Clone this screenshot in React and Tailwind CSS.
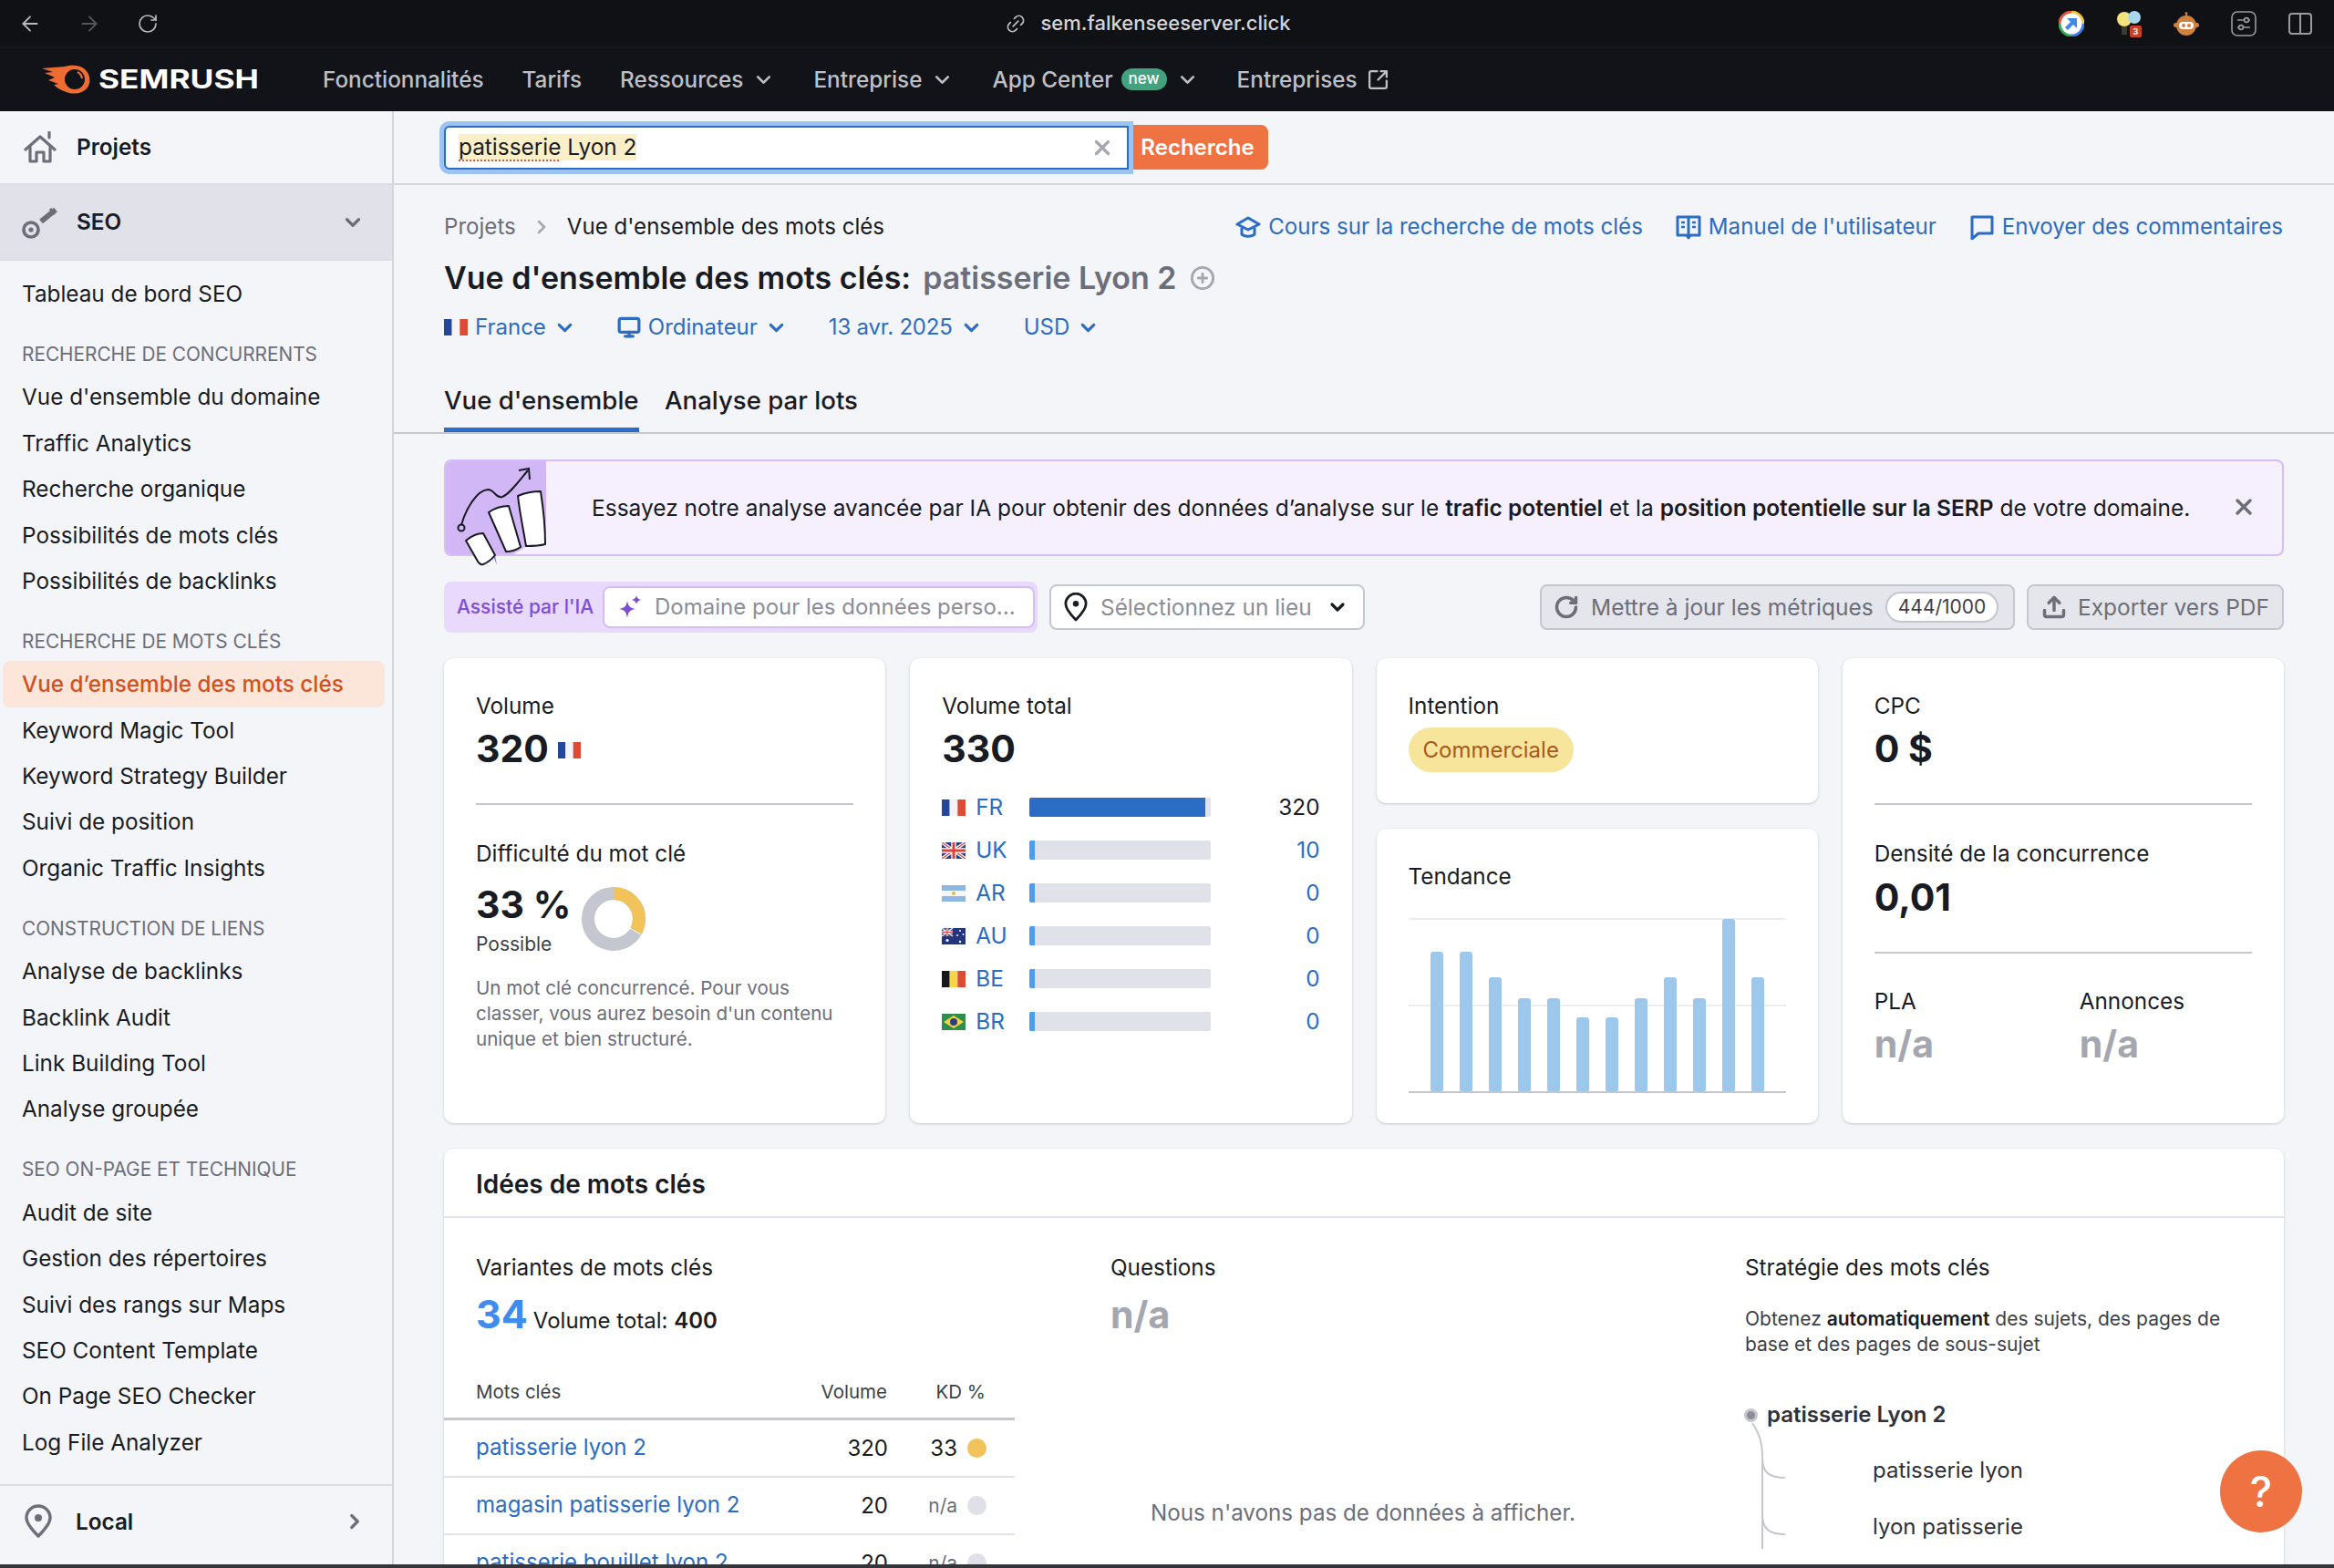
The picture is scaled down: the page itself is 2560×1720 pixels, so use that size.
import React from 'react';
import {
  ArrowLeft, ArrowRight, RotateCw, Link2, ChevronDown, ChevronRight, SquareArrowOutUpRight, X,
  Monitor, Upload, CirclePlus,
} from 'lucide-react';

const font = { fontFamily: 'Inter, "Noto Sans", sans-serif' };

const sideSections = [
  { title: null, items: ['Tableau de bord SEO'] },
  { title: 'RECHERCHE DE CONCURRENTS', items: ["Vue d'ensemble du domaine", 'Traffic Analytics', 'Recherche organique', 'Possibilités de mots clés', 'Possibilités de backlinks'] },
  { title: 'RECHERCHE DE MOTS CLÉS', items: ['Vue d’ensemble des mots clés', 'Keyword Magic Tool', 'Keyword Strategy Builder', 'Suivi de position', 'Organic Traffic Insights'] },
  { title: 'CONSTRUCTION DE LIENS', items: ['Analyse de backlinks', 'Backlink Audit', 'Link Building Tool', 'Analyse groupée'] },
  { title: 'SEO ON-PAGE ET TECHNIQUE', items: ['Audit de site', 'Gestion des répertoires', 'Suivi des rangs sur Maps', 'SEO Content Template', 'On Page SEO Checker', 'Log File Analyzer'] },
];

const FlagFR = ({ className = 'w-[26px] h-[18px]' }) => (
  <svg viewBox="0 0 3 2" preserveAspectRatio="none" className={className}>
    <rect width="1" height="2" fill="#25479b" />
    <rect x="1" width="1" height="2" fill="#f4f4f8" />
    <rect x="2" width="1" height="2" fill="#dc4b33" />
  </svg>
);
const FlagUK = () => (
  <svg viewBox="0 0 26 18" className="w-[26px] h-[18px]">
    <rect width="26" height="18" fill="#29408f" />
    <path d="M0 0L26 18M26 0L0 18" stroke="#fff" strokeWidth="3.5" />
    <path d="M0 0L26 18M26 0L0 18" stroke="#d8443a" strokeWidth="1.2" />
    <path d="M13 0V18M0 9H26" stroke="#fff" strokeWidth="5.5" />
    <path d="M13 0V18M0 9H26" stroke="#d8443a" strokeWidth="3" />
  </svg>
);
const FlagAR = () => (
  <svg viewBox="0 0 26 18" className="w-[26px] h-[18px]">
    <rect width="26" height="18" fill="#8db8e4" />
    <rect y="6" width="26" height="6" fill="#f5f6fa" />
    <circle cx="13" cy="9" r="2" fill="#e9b64c" />
  </svg>
);
const FlagAU = () => (
  <svg viewBox="0 0 26 18" className="w-[26px] h-[18px]">
    <rect width="26" height="18" fill="#23357f" />
    <rect width="12" height="9" fill="#3a4a90" />
    <path d="M0 0L12 9M12 0L0 9" stroke="#eee" strokeWidth="1.4" />
    <path d="M6 0V9M0 4.5H12" stroke="#fff" strokeWidth="2.4" />
    <path d="M6 0V9M0 4.5H12" stroke="#d8443a" strokeWidth="1.2" />
    <circle cx="6" cy="13.5" r="1.6" fill="#fff" />
    <circle cx="20" cy="3" r="1" fill="#fff" />
    <circle cx="23.5" cy="7" r="1" fill="#fff" />
    <circle cx="17" cy="8" r="1" fill="#fff" />
    <circle cx="20" cy="15" r="1.2" fill="#fff" />
  </svg>
);
const FlagBE = () => (
  <svg viewBox="0 0 3 2" preserveAspectRatio="none" className="w-[26px] h-[18px]">
    <rect width="1" height="2" fill="#17181c" />
    <rect x="1" width="1" height="2" fill="#f6d548" />
    <rect x="2" width="1" height="2" fill="#dc4b33" />
  </svg>
);
const FlagBR = () => (
  <svg viewBox="0 0 26 18" className="w-[26px] h-[18px]">
    <rect width="26" height="18" fill="#2f8f4a" />
    <path d="M13 2L24 9L13 16L2 9Z" fill="#f4d34a" />
    <circle cx="13" cy="9" r="4" fill="#27407f" />
  </svg>
);

const countries = [
  { code: 'FR', Flag: FlagFR, val: '320', fill: 97 },
  { code: 'UK', Flag: FlagUK, val: '10', fill: 3 },
  { code: 'AR', Flag: FlagAR, val: '0', fill: 3 },
  { code: 'AU', Flag: FlagAU, val: '0', fill: 3 },
  { code: 'BE', Flag: FlagBE, val: '0', fill: 3 },
  { code: 'BR', Flag: FlagBR, val: '0', fill: 3 },
];

const trend = [154, 154, 126, 103, 103, 82, 82, 103, 126, 103, 190, 126];

const keywords = [
  { kw: 'patisserie lyon 2', vol: '320', kd: '33', dot: 'bg-[#f2c35a]' },
  { kw: 'magasin patisserie lyon 2', vol: '20', kd: 'n/a', dot: 'bg-[#dfe0e8]' },
  { kw: 'patisserie bouillet lyon 2', vol: '20', kd: 'n/a', dot: 'bg-[#dfe0e8]' },
];

const SemrushLogo = () => (
  <div className="flex items-center gap-[8px]">
    <svg viewBox="0 0 54 32" className="w-[54px] h-[32px]">
      <path d="M0 4 L25 2 C32 0 42 0 47 5 C53 10 54 19 50 25 C45 32 34 33 27 30 C21 28 17 26 13 22 L18 21 L7 17 L14 14 L3 9 L12 8 Z" fill="#ef6d32" />
      <circle cx="36" cy="16" r="11" fill="#111318" />
      <path d="M39 8 A 9 9 0 0 1 44 15" fill="none" stroke="#ef6d32" strokeWidth="2.2" />
    </svg>
    <span className="text-[28px] leading-none font-bold text-white inline-block origin-left scale-x-[1.26] w-[146px]">SEMRUSH</span>
  </div>
);

const ExtensionIcons = () => (
  <div className="flex items-center gap-[35px] mr-[24px]">
    <svg viewBox="0 0 28 28" className="w-[28px] h-[28px]">
      <circle cx="14" cy="14" r="13" fill="#fff" />
      <path d="M14 1 A13 13 0 0 1 27 14" fill="none" stroke="#f2c23e" strokeWidth="3" />
      <path d="M27 14 A13 13 0 0 1 14 27" fill="none" stroke="#3f7ee8" strokeWidth="3" />
      <path d="M14 27 A13 13 0 0 1 1 14" fill="none" stroke="#3aa757" strokeWidth="3" />
      <path d="M1 14 A13 13 0 0 1 14 1" fill="none" stroke="#e4573d" strokeWidth="3" />
      <path d="M9 8H20V19L16 15L10 21L7 18L13 12Z" fill="#3f8ae8" />
    </svg>
    <div className="relative w-[28px] h-[30px]">
      <svg viewBox="0 0 28 30" className="w-[28px] h-[30px]">
        <circle cx="9" cy="10" r="8" fill="#f4e27a" />
        <circle cx="20" cy="8" r="7" fill="#a8d8ee" />
        <rect x="6" y="18" width="6" height="9" fill="#3c3a30" />
      </svg>
      <span className="absolute right-0 bottom-0 w-[13px] h-[13px] rounded-[2px] bg-[#c9402a] text-white text-[9px] leading-[13px] text-center font-bold">3</span>
    </div>
    <svg viewBox="0 0 28 28" className="w-[28px] h-[28px]">
      <circle cx="14" cy="2.5" r="1.5" fill="#c9773a" />
      <rect x="13" y="3" width="2" height="4" fill="#c9773a" />
      <circle cx="14" cy="16" r="11" fill="#d2803e" />
      <rect x="0" y="13" width="28" height="5" rx="2.5" fill="#d2803e" />
      <rect x="6" y="12" width="16" height="8" rx="4" fill="#fff" />
      <circle cx="11" cy="16" r="2" fill="#d2803e" />
      <circle cx="17" cy="16" r="2" fill="#d2803e" />
    </svg>
    <svg viewBox="0 0 28 28" fill="none" stroke="#9a9ba0" strokeWidth="1.6" className="w-[28px] h-[28px]">
      <rect x="1" y="1" width="26" height="26" rx="6" />
      <path d="M7 10H21M7 18H21" />
      <circle cx="17" cy="10" r="2.4" fill="#111318" />
      <circle cx="11" cy="18" r="2.4" fill="#111318" />
    </svg>
    <svg viewBox="0 0 26 26" fill="none" stroke="#9a9ba0" strokeWidth="2" className="w-[26px] h-[26px]">
      <rect x="1" y="2" width="24" height="22" rx="3" />
      <path d="M13 2V24" />
    </svg>
  </div>
);

const Chrome = () => (
  <div className="relative h-[52px] bg-[#0f1115] border-b border-[#1e1c1c] flex items-center shrink-0">
    <div className="flex items-center gap-[39px] pl-[20px] text-[#b9babd]">
      <ArrowLeft className="w-[26px] h-[26px]" strokeWidth={1.7} />
      <ArrowRight className="w-[26px] h-[26px] text-[#55565a]" strokeWidth={1.7} />
      <RotateCw className="w-[24px] h-[24px]" strokeWidth={1.7} />
    </div>
    <div className="flex-1 flex items-center justify-center gap-[15px] pr-[344px] pl-[430px]">
      <Link2 className="w-[24px] h-[24px] text-[#b9babd] -rotate-45" strokeWidth={1.8} />
      <span className="text-[22px] font-medium text-[#d3d4d7] whitespace-nowrap">sem.falkenseeserver.click</span>
    </div>
    <ExtensionIcons />
  </div>
);

const NavItem = ({ children, chevron }) => (
  <span className="flex items-center gap-[10px] text-[24.3px] font-medium text-[#bfc0c7] whitespace-nowrap">
    {children}
    {chevron && <ChevronDown className="w-[25px] h-[25px]" strokeWidth={2.6} />}
  </span>
);

const TopNav = () => (
  <div className="h-[70px] bg-[#111318] flex items-center pl-[46px] shrink-0">
    <div className="w-[308px] shrink-0"><SemrushLogo /></div>
    <div className="flex items-center gap-[42px]">
      <NavItem>Fonctionnalités</NavItem>
      <NavItem>Tarifs</NavItem>
      <NavItem chevron>Ressources</NavItem>
      <NavItem chevron>Entreprise</NavItem>
      <NavItem chevron>
        App Center
        <span className="-ml-[1px] h-[24px] px-[8px] rounded-full bg-[#43a17f] text-white text-[17px] leading-[23px] font-medium">new</span>
      </NavItem>
      <NavItem>
        Entreprises
        <SquareArrowOutUpRight className="w-[25px] h-[25px]" strokeWidth={2.2} />
      </NavItem>
    </div>
  </div>
);

const Sidebar = () => (
  <aside className="w-[432px] shrink-0 border-r-2 border-[#d5d6de] bg-[#f4f5f9] flex flex-col">
    <div className="h-[81px] flex items-center gap-[22px] pl-[26px] border-b-2 border-[#dcdde4] shrink-0">
      <svg viewBox="0 0 36 36" fill="none" stroke="#6c6e79" strokeWidth="3.2" strokeLinejoin="round" strokeLinecap="round" className="w-[36px] h-[36px]">
        <path d="M2 20L18 6L34 20" />
        <path d="M7 17V33H14V23H22V33H29V17" />
        <path d="M28 1V7" />
      </svg>
      <span className="text-[24.3px] font-semibold text-[#191b23]">Projets</span>
    </div>
    <div className="h-[83px] flex items-center justify-between pl-[24px] pr-[30px] bg-[#e0e1e9] border-b-2 border-[#dcdde4] shrink-0">
      <div className="flex items-center gap-[20px]">
        <svg viewBox="0 0 40 38" fill="none" stroke="#6c6e79" className="w-[40px] h-[38px]">
          <circle cx="10" cy="27" r="8" strokeWidth="3.6" />
          <circle cx="10" cy="27" r="2.6" fill="#6c6e79" stroke="none" />
          <path d="M21 18L37 5" strokeWidth="6" />
          <path d="M31 4L36 10" strokeWidth="3" />
        </svg>
        <span className="text-[24.3px] font-semibold text-[#191b23]">SEO</span>
      </div>
      <ChevronDown className="w-[26px] h-[26px] text-[#6c6e79]" strokeWidth={3} />
    </div>
    <nav className="pt-[11px] flex-1 min-h-0">
      {sideSections.map((sec) => (
        <div key={sec.items[0]} className={sec.title ? 'mt-[19px]' : ''}>
          {sec.title && (
            <div className="h-[44px] flex items-center pl-[24px] text-[20.8px] text-[#6c6e79] whitespace-nowrap">{sec.title}</div>
          )}
          {sec.items.map((it) => {
            const active = it === 'Vue d’ensemble des mots clés';
            return (
              <div key={it} className={active ? 'h-[50.4px] flex items-center ml-[3px] mr-[8px] pl-[21px] rounded-[8px] bg-[#fce6da] text-[#d5501f] font-medium text-[24.3px] whitespace-nowrap' : 'h-[50.4px] flex items-center pl-[24px] text-[#191b23] text-[24.3px] whitespace-nowrap'}>
                {it}
              </div>
            );
          })}
        </div>
      ))}
    </nav>
    <div className="h-[88px] pb-[8px] flex items-center justify-between pl-[26px] pr-[28px] border-t-2 border-[#dcdde4] shrink-0">
      <div className="flex items-center gap-[25px]">
        <svg viewBox="0 0 32 38" fill="none" stroke="#6c6e79" strokeWidth="3.4" className="w-[32px] h-[38px]">
          <path d="M16 35C8 27 3 21 3 15A13 13 0 0 1 29 15C29 21 24 27 16 35Z" strokeLinejoin="round" />
          <circle cx="16" cy="15" r="4" fill="#6c6e79" stroke="none" />
        </svg>
        <span className="text-[24.3px] font-semibold text-[#191b23]">Local</span>
      </div>
      <ChevronRight className="w-[26px] h-[26px] text-[#6c6e79]" strokeWidth={3} />
    </div>
  </aside>
);

const SearchBar = () => (
  <div className="h-[81px] flex items-center pl-[55px] border-b-2 border-[#d5d6de] shrink-0">
    <div className="relative w-[751px] h-[48px] flex items-center justify-between pl-[14px] pr-[14px] bg-white rounded-l-[6px] border-2 border-[#2b6cc4] shadow-[0_0_0_5px_#9cc3f2]">
      <span className="text-[24.4px] leading-[29px] bg-[#fbefc8] text-[#191b23] whitespace-nowrap">
        <span className="underline decoration-dotted decoration-[#e4573d] decoration-2 underline-offset-[5px]">patisserie</span> Lyon 2
      </span>
      <X className="w-[26px] h-[26px] text-[#a4a6b0]" strokeWidth={3} />
    </div>
    <div className="ml-[3px] w-[150px] h-[49px] pr-[5px] flex items-center justify-center rounded-r-[8px] bg-[#ef7342] text-white text-[24px] font-semibold">Recherche</div>
  </div>
);

const TopLink = ({ icon, children }) => (
  <span className="flex items-center gap-[8px] text-[24.1px] text-[#2b6cc4] whitespace-nowrap">{icon}{children}</span>
);

const Filter = ({ icon, children }) => (
  <span className="flex items-center gap-[8px] text-[24px] text-[#2b6cc4] whitespace-nowrap">
    {icon}{children}
    <ChevronDown className="w-[25px] h-[25px]" strokeWidth={3} />
  </span>
);

const PageHead = () => (
  <div className="px-[55px] shrink-0">
    <div className="h-[90px] flex items-center justify-between pt-[2px]">
      <div className="flex items-center text-[24.1px] whitespace-nowrap">
        <span className="text-[#6c6e79]">Projets</span>
        <ChevronRight className="w-[24px] h-[24px] mx-[16px] text-[#a4a6b0]" strokeWidth={2.5} />
        <span className="text-[#191b23]">Vue d'ensemble des mots clés</span>
      </div>
      <div className="flex items-center gap-[36px] mr-[1px]">
        <TopLink icon={
          <svg viewBox="0 0 28 28" fill="none" stroke="#2b6cc4" strokeWidth="3" className="w-[28px] h-[28px]">
            <path d="M14 4L26 11L14 17L2 11Z" strokeLinejoin="round" />
            <path d="M7 15V22C10 25 18 25 21 22V15" />
          </svg>
        }>Cours sur la recherche de mots clés</TopLink>
        <TopLink icon={
          <svg viewBox="0 0 28 28" fill="none" stroke="#2b6cc4" strokeWidth="3" className="w-[28px] h-[28px]">
            <path d="M2 3H26V23H16L14 26L12 23H2Z" strokeLinejoin="round" />
            <path d="M14 3V23" />
            <path d="M6 9H10M6 14H10M18 9H22M18 14H22" strokeWidth="2.6" />
          </svg>
        }>Manuel de l'utilisateur</TopLink>
        <TopLink icon={
          <svg viewBox="0 0 28 28" fill="none" stroke="#2b6cc4" strokeWidth="3" className="w-[28px] h-[28px]">
            <path d="M3 3H25V21H10L3 27Z" strokeLinejoin="round" />
          </svg>
        }>Envoyer des commentaires</TopLink>
      </div>
    </div>
    <div className="h-[36px] flex items-center whitespace-nowrap -mt-[6px]">
      <h1 className="text-[34px] leading-none font-semibold text-[#191b23]">Vue d'ensemble des mots clés:</h1>
      <span className="ml-[13px] text-[34px] leading-none font-semibold text-[#6c6e79]">patisserie Lyon 2</span>
      <CirclePlus className="ml-[14px] w-[28px] h-[28px] text-[#a4a6b0]" strokeWidth={2.4} />
    </div>
    <div className="flex items-center gap-[45px] h-[40px] mt-[16px]">
      <Filter icon={<FlagFR />}>France</Filter>
      <Filter icon={<Monitor className="w-[26px] h-[26px]" strokeWidth={3} />}>Ordinateur</Filter>
      <Filter><span className="tracking-[-0.2px]">13 avr. 2025</span></Filter>
      <Filter>USD</Filter>
    </div>
    <div className="flex gap-[28px] mt-[36px] text-[27.6px] leading-none text-[#191b23] font-medium">
      <div className="h-[60px] pt-[11px] border-b-[6px] border-[#2b6cc4] w-[214px] whitespace-nowrap">Vue d'ensemble</div>
      <div className="pt-[11px] whitespace-nowrap">Analyse par lots</div>
    </div>
  </div>
);

const Banner = () => (
  <div className="mx-[55px] mt-[28px] h-[106px] shrink-0 flex items-center rounded-[8px] border-2 border-[#d7bdf6] bg-[#f6f0fe] relative">
    <div className="relative w-[110px] h-[102px] shrink-0 bg-[#d2b7f6] rounded-l-[6px]">
      <svg viewBox="0 0 112 126" fill="none" className="absolute left-0 top-0 w-[112px] h-[126px]">
        <path d="M110 80L110 102L74 102Z" fill="#f6f0fe" />
        <path d="M17 70C22 52 34 32 46 31C54 31 54 41 62 39C70 36 80 22 90 10" stroke="#191b23" strokeWidth="2" />
        <path d="M80 10L91 8L92 20" stroke="#191b23" strokeWidth="2" />
        <circle cx="17" cy="73" r="3.5" stroke="#191b23" strokeWidth="2" />
        <path d="M56 114L42 79L54 103Z" fill="#9a72e6" />
        <path d="M22 87C28 82 34 79 41 79L54 103C50 108 46 111 41 113C38 114 36 112 34 108Z" fill="#fff" stroke="#191b23" strokeWidth="2" strokeLinejoin="round" />
        <path d="M69 49L83 94L78 96Z" fill="#9a72e6" />
        <path d="M47 56C54 51 62 49 69 49L82 94C78 97 72 99 66 99Z" fill="#fff" stroke="#191b23" strokeWidth="2" strokeLinejoin="round" />
        <path d="M104 33L110 91L106 92Z" fill="#9a72e6" />
        <path d="M79 38C86 35 96 33 104 33C107 52 109 72 109 91C102 93 94 93 88 93C85 75 81 56 79 38Z" fill="#fff" stroke="#191b23" strokeWidth="2" strokeLinejoin="round" />
      </svg>
    </div>
    <p className="ml-[50px] text-[24.5px] text-[#191b23] whitespace-nowrap">
      Essayez notre analyse avancée par IA pour obtenir des données d’analyse sur le <b className="font-semibold">trafic potentiel</b> et la <b className="font-semibold">position potentielle sur la SERP</b> de votre domaine.
    </p>
    <X className="absolute right-[28px] top-[36px] w-[28px] h-[28px] text-[#6c6e79]" strokeWidth={3} />
  </div>
);

const Toolbar = () => (
  <div className="mx-[55px] mt-[28px] h-[56px] shrink-0 flex items-center">
    <div className="w-[651px] h-[56px] rounded-[8px] bg-[#e9d9fc] flex items-center pl-[14px] pr-[3px]">
      <span className="w-[160px] text-[21px] font-medium text-[#7c4ed8] whitespace-nowrap">Assisté par l'IA</span>
      <div className="flex-1 h-[46px] rounded-[8px] bg-white border-2 border-[#d7bdf6] flex items-center pl-[14px] gap-[13px]">
        <svg viewBox="0 0 28 28" fill="#7c4ed8" className="w-[28px] h-[28px]">
          <path d="M11 7C12 13 14 15 20 16C14 17 12 19 11 26C10 19 8 17 2 16C8 15 10 13 11 7Z" />
          <path d="M21 1C21.5 4 23 5 26 6C23 7 21.5 8 21 11C20.5 8 19 7 16 6C19 5 20.5 4 21 1Z" />
        </svg>
        <span className="text-[24px] text-[#8b8d98] whitespace-nowrap">Domaine pour les données perso...</span>
      </div>
    </div>
    <div className="ml-[13px] w-[346px] h-[50px] rounded-[8px] bg-white border-2 border-[#c4c6d0] flex items-center justify-between pl-[14px] pr-[16px]">
      <div className="flex items-center gap-[14px]">
        <svg viewBox="0 0 28 34" fill="none" stroke="#191b23" strokeWidth="3" className="w-[26px] h-[32px]">
          <path d="M14 32C7 25 2 19 2 13A12 12 0 0 1 26 13C26 19 21 25 14 32Z" strokeLinejoin="round" />
          <circle cx="14" cy="13" r="3.5" fill="#191b23" stroke="none" />
        </svg>
        <span className="text-[24.4px] text-[#8b8d98] whitespace-nowrap">Sélectionnez un lieu</span>
      </div>
      <ChevronDown className="w-[24px] h-[24px] text-[#191b23]" strokeWidth={3.2} />
    </div>
    <div className="ml-auto flex items-center gap-[13px]">
      <div className="w-[521px] h-[50px] rounded-[8px] bg-[#e4e6ec] border-2 border-[#c4c6d0] flex items-center pl-[13px] text-[24.5px] text-[#6c6e79] whitespace-nowrap">
        <RotateCw className="w-[28px] h-[28px] mr-[13px]" strokeWidth={3} />
        Mettre à jour les métriques
        <span className="ml-[13px] h-[34px] px-[12px] rounded-full bg-white border-2 border-[#c4c6d0] text-[21px] leading-[30px] text-[#3d3f48]">444/1000</span>
      </div>
      <div className="w-[282px] h-[50px] rounded-[8px] bg-[#e4e6ec] border-2 border-[#c4c6d0] flex items-center pl-[14px] text-[24.5px] text-[#6c6e79] whitespace-nowrap">
        <Upload className="w-[28px] h-[28px] mr-[12px]" strokeWidth={3} />
        Exporter vers PDF
      </div>
    </div>
  </div>
);

const Card = ({ className = '', children }) => (
  <div className={`bg-white rounded-[10px] shadow-[0_1px_3px_rgba(25,27,35,0.2)] ${className}`}>{children}</div>
);

const Label = ({ children }) => <div className="text-[24.3px] leading-[30px] text-[#191b23] whitespace-nowrap">{children}</div>;

const Metric = ({ children }) => <div className="text-[41px] leading-[52px] font-bold text-[#191b23] whitespace-nowrap">{children}</div>;

const NotAvailable = () => <div className="text-[41px] leading-[52px] font-bold text-[#a4a6b0]">n/a</div>;

const VolumeCard = () => (
  <Card className="h-[510px] pt-[37px] px-[35px]">
    <Label>Volume</Label>
    <div className="flex items-center gap-[10px] mt-[6px]">
      <Metric>320</Metric>
      <FlagFR className="w-[25px] h-[18px] mt-[3px]" />
    </div>
    <div className="h-[2px] bg-[#c4c6d0] mt-[34px]" />
    <div className="mt-[38px]"><Label>Difficulté du mot clé</Label></div>
    <div className="flex items-center gap-[11px] mt-[15px]">
      <div>
        <Metric>33 %</Metric>
        <div className="text-[21px] leading-[28px] text-[#3d3f48] mt-[4px]">Possible</div>
      </div>
      <svg viewBox="0 0 72 72" className="w-[72px] h-[72px]">
        <circle cx="36" cy="36" r="28" fill="none" stroke="#c4c6d0" strokeWidth="14" />
        <circle cx="36" cy="36" r="28" fill="none" stroke="#f2c35a" strokeWidth="14" pathLength="100" strokeDasharray="33 67" transform="rotate(-90 36 36)" />
        <path d="M36 36L66 53" stroke="#fff" strokeWidth="1" />
      </svg>
    </div>
    <p className="mt-[20px] text-[20.6px] leading-[28px] text-[#6c6e79]">
      Un mot clé concurrencé. Pour vous classer, vous aurez besoin d'un contenu unique et bien structuré.
    </p>
  </Card>
);

const TotalCard = () => (
  <Card className="h-[510px] pt-[37px] px-[35px]">
    <Label>Volume total</Label>
    <div className="mt-[6px]"><Metric>330</Metric></div>
    <div className="mt-[15px]">
      {countries.map(({ code, Flag, val, fill }) => (
        <div key={code} className="h-[47px] flex items-center">
          <Flag />
          <span className="w-[70px] pl-[11px] text-[24.3px] text-[#2b6cc4]">{code}</span>
          <div className="w-[199px] h-[21px] rounded-[2px] bg-[#e0e1e9] overflow-hidden">
            <div className={code === 'FR' ? 'h-full bg-[#2b6cc4]' : 'h-full bg-[#4a9df0]'} style={{ width: `${fill}%` }} />
          </div>
          <span className={code === 'FR' ? 'flex-1 text-right text-[24.3px] text-[#191b23]' : 'flex-1 text-right text-[24.3px] text-[#2b6cc4]'}>{val}</span>
        </div>
      ))}
    </div>
  </Card>
);

const TrendChart = () => (
  <svg viewBox="0 0 414 192" className="w-[414px] h-[192px] mt-[31px]">
    <path d="M0 1H414M0 96H414" stroke="#e7e8ee" strokeWidth="1.5" />
    {trend.map((h, i) => (
      <rect key={i} x={24 + i * 32} y={191 - h} width="14" height={h} rx="3" fill="#9ec7ec" />
    ))}
    <path d="M0 191H414" stroke="#c4c6d0" strokeWidth="2" />
  </svg>
);

const MiddleColumn = () => (
  <div className="flex flex-col gap-[28px]">
    <Card className="h-[159px] pt-[37px] px-[35px]">
      <Label>Intention</Label>
      <span className="inline-block mt-[9px] h-[49px] px-[16px] rounded-full bg-[#f8e59c] text-[24px] leading-[49px] text-[#a8591c]">Commerciale</span>
    </Card>
    <Card className="h-[323px] pt-[37px] px-[35px]">
      <Label>Tendance</Label>
      <TrendChart />
    </Card>
  </div>
);

const CpcCard = () => (
  <Card className="h-[510px] pt-[37px] px-[35px]">
    <Label>CPC</Label>
    <div className="mt-[6px]"><Metric>0 $</Metric></div>
    <div className="h-[2px] bg-[#c4c6d0] mt-[34px]" />
    <div className="mt-[38px]"><Label>Densité de la concurrence</Label></div>
    <div className="mt-[7px]"><Metric>0,01</Metric></div>
    <div className="h-[2px] bg-[#c4c6d0] mt-[34px]" />
    <div className="mt-[37px] grid grid-cols-[225px_1fr]">
      <div>
        <Label>PLA</Label>
        <div className="mt-[6px]"><NotAvailable /></div>
      </div>
      <div>
        <Label>Annonces</Label>
        <div className="mt-[6px]"><NotAvailable /></div>
      </div>
    </div>
  </Card>
);

const IdeasCard = () => (
  <div className="mx-[55px] mt-[28px] flex-1 min-h-0 bg-white rounded-t-[10px] shadow-[0_1px_3px_rgba(25,27,35,0.2)]">
    <div className="h-[76px] pt-[4px] flex items-center px-[35px] border-b-2 border-[#e0e1e9] text-[28px] font-semibold text-[#191b23]">Idées de mots clés</div>
    <div className="grid grid-cols-[696px_696px_1fr] pl-[35px] pt-[39px]">
      <div>
        <Label>Variantes de mots clés</Label>
        <div className="flex items-baseline mt-[10px] h-[52px] whitespace-nowrap">
          <span className="text-[43px] leading-[52px] font-bold text-[#3f8cf0]">34</span>
          <span className="ml-[6px] text-[24px] text-[#191b23]">Volume total: <b className="font-semibold">400</b></span>
        </div>
        <div className="-ml-[35px] w-[626px] mt-[37px]">
          <div className="h-[54px] grid grid-cols-[1fr_100px_108px] items-center pl-[35px] pr-[32px] border-b-[3px] border-[#c4c6d0] text-[20.5px] text-[#3d3f48] pb-[4px]">
            <span>Mots clés</span>
            <span className="text-right">Volume</span>
            <span className="text-right">KD %</span>
          </div>
          {keywords.map((k) => (
            <div key={k.kw} className="h-[63px] grid grid-cols-[1fr_100px_108px] items-center pl-[35px] pr-[31px] border-b-2 border-[#e0e1e9] whitespace-nowrap">
              <span className="text-[24.1px] text-[#2b6cc4]">{k.kw}</span>
              <span className="text-right text-[24px] text-[#191b23]">{k.vol}</span>
              <span className="flex items-center justify-end gap-[11px]">
                <span className={k.kd === 'n/a' ? 'text-[21px] text-[#6c6e79]' : 'text-[24px] text-[#191b23]'}>{k.kd}</span>
                <span className={`w-[21px] h-[21px] rounded-full ${k.dot}`} />
              </span>
            </div>
          ))}
        </div>
      </div>
      <div>
        <Label>Questions</Label>
        <div className="mt-[11px]"><NotAvailable /></div>
        <p className="mt-[174px] pl-[44px] text-[24.2px] text-[#6c6e79] whitespace-nowrap">Nous n'avons pas de données à afficher.</p>
      </div>
      <div>
        <Label>Stratégie des mots clés</Label>
        <p className="mt-[28px] text-[21px] leading-[28px] text-[#3d3f48] whitespace-nowrap">
          Obtenez <b className="font-semibold text-[#191b23]">automatiquement</b> des sujets, des pages de<br />base et des pages de sous-sujet
        </p>
        <div className="relative mt-[46px]">
          <div className="flex items-center h-[34px] pl-[24px] text-[24px] font-semibold text-[#2f3138]">patisserie Lyon 2</div>
          <span className="absolute -left-[1px] top-[10px] w-[15px] h-[15px] rounded-full bg-[#8b8d98] border-[3px] border-[#c4c6d0]" />
          <svg viewBox="0 0 40 140" fill="none" stroke="#c4c6d0" strokeWidth="2" className="absolute left-[4px] top-[24px] w-[40px] h-[140px]">
            <path d="M4 2C12 14 15 24 15 40V140" />
            <path d="M15 40C15 56 22 62 40 62" />
            <path d="M15 102C15 118 22 124 40 124" />
          </svg>
          <div className="pl-[140px] pt-[13px] text-[24px] leading-[62px] text-[#2f3138] whitespace-nowrap">
            <div>patisserie lyon</div>
            <div>lyon patisserie</div>
          </div>
        </div>
      </div>
    </div>
  </div>
);

export default function App() {
  return (
    <div style={font} className="relative w-[2560px] h-[1720px] overflow-hidden flex flex-col bg-[#f4f5f9]">
      <Chrome />
      <TopNav />
      <div className="flex flex-1 min-h-0">
        <Sidebar />
        <main className="flex-1 min-w-0 flex flex-col overflow-hidden">
          <SearchBar />
          <PageHead />
          <div className="h-[2px] bg-[#c4c6d0] -mt-[1px] shrink-0" />
          <Banner />
          <Toolbar />
          <div className="mx-[55px] mt-[28px] grid grid-cols-4 gap-[27px] shrink-0">
            <VolumeCard />
            <TotalCard />
            <MiddleColumn />
            <CpcCard />
          </div>
          <IdeasCard />
        </main>
      </div>
      <div className="h-[4px] bg-[#33353b] shrink-0" />
      <div className="absolute left-[2435px] top-[1591px] w-[90px] h-[90px] rounded-full bg-[#ef7342] flex items-center justify-center text-white text-[46px] font-medium">?</div>
    </div>
  );
}
